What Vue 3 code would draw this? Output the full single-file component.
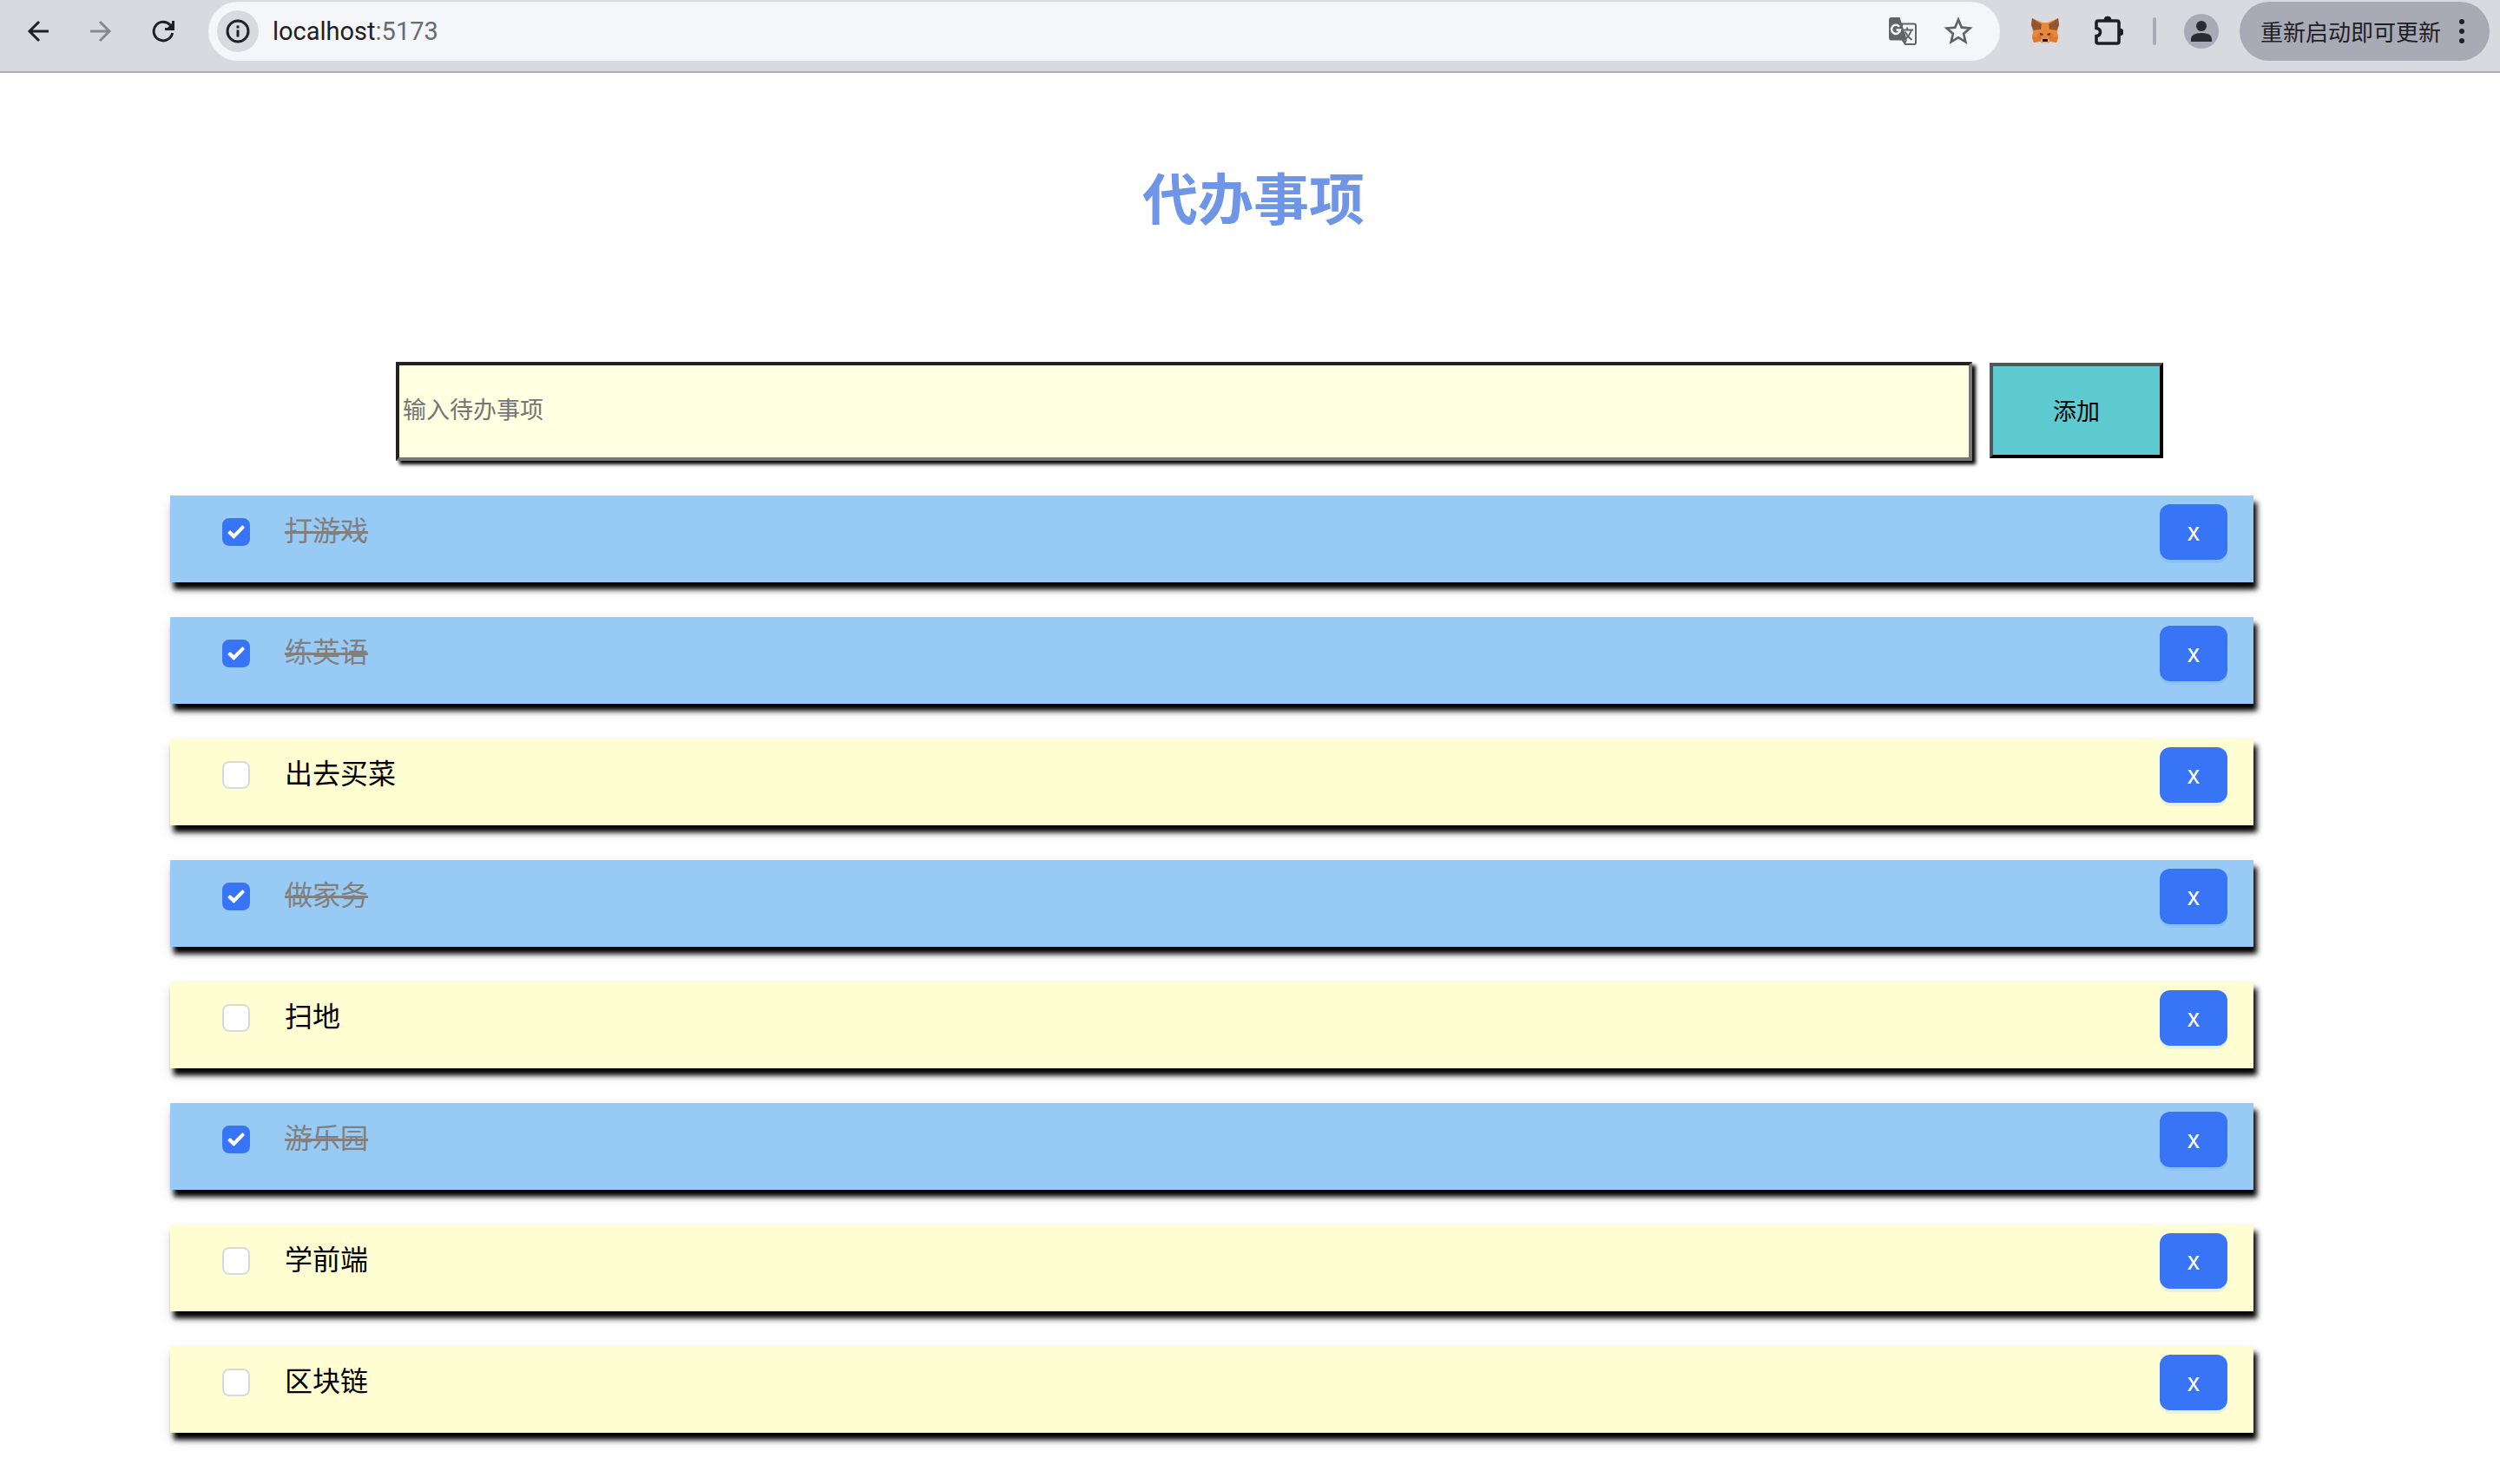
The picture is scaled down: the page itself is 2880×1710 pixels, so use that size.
<script setup>
import { ref } from 'vue'

const draft = ref('')
const todos = ref([
  { id: 1, text: '打游戏', done: true },
  { id: 2, text: '练英语', done: true },
  { id: 3, text: '出去买菜', done: false },
  { id: 4, text: '做家务', done: true },
  { id: 5, text: '扫地', done: false },
  { id: 6, text: '游乐园', done: true },
  { id: 7, text: '学前端', done: false },
  { id: 8, text: '区块链', done: false },
])

function addTodo() {
  const text = draft.value.trim()
  if (!text) return
  todos.value.push({ id: Date.now(), text, done: false })
  draft.value = ''
}

function removeTodo(id) {
  todos.value = todos.value.filter((todo) => todo.id !== id)
}
</script>

<template>
  <div class="window">
    <header class="toolbar">
      <nav class="nav">
        <button type="button" class="icon-button" aria-label="后退">
          <svg width="32" height="32" viewBox="0 0 32 32" fill="none" stroke="#1f2024" stroke-width="3">
            <path d="M28 16H6M17 5L6 16l11 11" />
          </svg>
        </button>
        <button type="button" class="icon-button" aria-label="前进">
          <svg width="32" height="32" viewBox="0 0 32 32" fill="none" stroke="#87898d" stroke-width="3">
            <path d="M4 16h22M15 5l11 11-11 11" />
          </svg>
        </button>
        <button type="button" class="icon-button" aria-label="重新加载">
          <svg width="32" height="32" viewBox="0 0 32 32" fill="none" stroke="#1f2024" stroke-width="3">
            <path d="M26.600 18A10.800 10.800 0 1 1 24 8.800l2.600 3.200" />
            <path d="M27.500 4v9.500h-9.500" />
            <path d="M26 7v5h-5z" fill="#1f2024" stroke="none" />
          </svg>
        </button>
      </nav>

      <div class="omnibox">
        <button type="button" class="site-info" aria-label="网站信息">
          <svg width="28" height="28" viewBox="0 0 28 28" fill="none" stroke="#1f2024" stroke-width="3">
            <circle cx="14" cy="14" r="12" />
            <path d="M14 12.500v8" />
            <path d="M14 7.500v3" />
          </svg>
        </button>
        <span class="address">localhost<span class="port">:5173</span></span>
        <div class="omnibox-actions">
          <button type="button" class="icon-button" aria-label="翻译此页">
            <svg width="32" height="32" viewBox="0 0 32 32" fill="none">
              <path d="M15 7.500h14q2 0 2 2V29q0 2-2 2H19l-4-6z" fill="#f5f6f9" stroke="#616366" stroke-width="2" />
              <path d="M3 0h9.500l8.500 26.500H3q-3 0-3-3V3q0-3 3-3z" fill="#616366" />
              <path d="M15.500 26.500H21L18.500 31z" fill="#616366" />
              <path d="M12 10.800A5 5 0 1 0 13 14.500H8.500" stroke="#f5f6f9" stroke-width="2.500" />
              <path d="M17 14.500h11M21 11.500v3M26 14.500q-2 7-8 11M18.500 16.500q3 6 8 9.500" stroke="#616366" stroke-width="1.800" />
            </svg>
          </button>
          <button type="button" class="icon-button" aria-label="为此标签页添加书签">
            <svg width="40" height="40" viewBox="0 0 24 24" fill="#616366">
              <path
                d="M22 9.240l-7.190-.62L12 2 9.190 8.630 2 9.240l5.460 4.730L5.820 21 12 17.270 18.180 21l-1.630-7.030L22 9.240zM12 15.400l-3.760 2.270 1-4.280-3.320-2.880 4.380-.38L12 6.100l1.710 4.040 4.380.38-3.320 2.880 1 4.280L12 15.400z"
              />
            </svg>
          </button>
        </div>
      </div>

      <div class="extensions">
        <button type="button" class="icon-button" aria-label="MetaMask">
          <svg width="32" height="32" viewBox="0 0 32 32">
            <path d="M1 1l12 5h6l12-5 1 7-2 9 1 6-2 6-7-1-3 2h-6l-3-2-7 1-2-6 1-6L0 8z" fill="#e8883a" />
            <path d="M1 1l11 7-1 6-8 1-3-6zM31 1l-11 7 1 6 8 1 3-6z" fill="#8f5630" />
            <path d="M3 15l8-1-5 7-5 2zM29 15l-8-1 5 7 5 2z" fill="#e8883a" />
            <path d="M1 23l9-1 1 5-8 2zM31 23l-9-1-1 5 8 2z" fill="#dc7830" />
            <path d="M6 21l4-4 3 3-2 5zM26 21l-4-4-3 3 2 5z" fill="#d9772f" />
            <path d="M10 18l4 1-1 2-3-1zM22 18l-4 1 1 2 3-1z" fill="#4a4038" />
            <path d="M11 27l2-2h6l2 2-3 3h-4z" fill="#d5bfb2" />
            <path d="M13 25h6v3h-6z" fill="#15120f" />
          </svg>
        </button>
        <button type="button" class="icon-button" aria-label="扩展程序">
          <svg width="36" height="36" viewBox="0 0 36 36">
            <path
              d="M5 8q0-2 2-2h22q2 0 2 2v22q0 2-2 2H7q-2 0-2-2v-6.500q4.500-.5 4.500-4.500T5 14.500z"
              fill="none"
              stroke="#1f2024"
              stroke-width="3.600"
            />
            <path d="M14 5a4 4 0 0 1 8 0zM32 15a4 4 0 0 1 0 8z" fill="#1f2024" stroke="#1f2024" />
          </svg>
        </button>
        <span class="divider"></span>
        <button type="button" class="avatar" aria-label="个人资料">
          <svg width="40" height="40" viewBox="0 0 40 40" fill="#2b2c31">
            <circle cx="20" cy="14" r="6" />
            <path d="M8 32v-3.500Q9 22 20 22t12 6.500V32z" />
          </svg>
        </button>
      </div>

      <button type="button" class="update">
        <span class="update-text">重新启动即可更新</span>
        <svg width="8" height="32" viewBox="0 0 8 32" fill="#1f2024">
          <circle cx="4" cy="5" r="3" />
          <circle cx="4" cy="16" r="3" />
          <circle cx="4" cy="27" r="3" />
        </svg>
      </button>
    </header>

    <main class="page">
      <h1 class="title">代办事项</h1>

      <form class="entry" @submit.prevent="addTodo">
        <input v-model="draft" class="entry-input" type="text" placeholder="输入待办事项" aria-label="输入待办事项" />
        <button class="entry-add" type="submit">添加</button>
      </form>

      <ul class="list">
        <li v-for="todo in todos" :key="todo.id" class="item" :class="{ done: todo.done }">
          <label class="item-label">
            <input v-model="todo.done" class="check" type="checkbox" />
            <span class="item-text">{{ todo.text }}</span>
          </label>
          <button class="remove" type="button" @click="removeTodo(todo.id)">x</button>
        </li>
      </ul>
    </main>
  </div>
</template>

<style>
body {
  margin: 0;
  background: #fff;
}
</style>

<style scoped>
.window {
  font-family: Roboto, "Noto Sans CJK SC", sans-serif;
  color: #000;
}

button,
input {
  box-sizing: border-box;
  margin: 0;
  font-family: inherit;
}

svg {
  display: block;
}

.toolbar {
  box-sizing: border-box;
  display: flex;
  align-items: flex-start;
  height: 84px;
  padding: 2px 12px 0 28px;
  background: #d9dae0;
  border-bottom: 2px solid #aeb0b6;
}

.nav,
.extensions {
  display: flex;
  align-items: center;
  height: 68px;
}

.nav {
  gap: 40px;
  margin-right: 36px;
}

.icon-button {
  padding: 0;
  background: none;
  border: 0;
}

.omnibox {
  display: flex;
  flex: 1;
  align-items: center;
  height: 68px;
  box-sizing: border-box;
  padding: 0 28px 0 10px;
  background: #f5f6f9;
  border-radius: 34px;
}

.site-info {
  display: grid;
  place-items: center;
  width: 48px;
  height: 48px;
  padding: 0;
  background: #d9dae0;
  border: 0;
  border-radius: 50%;
}

.address {
  flex: 1;
  margin-left: 16px;
  font-size: 29px;
  line-height: 40px;
  color: #1f2024;
}

.port {
  color: #6a6b6e;
}

.omnibox-actions {
  display: flex;
  align-items: center;
  gap: 28px;
}

.extensions {
  margin: 0 24px 0 36px;
}

.extensions .icon-button + .icon-button {
  margin-left: 38px;
}

.divider {
  width: 4px;
  height: 32px;
  margin: 0 32px 0 34px;
  background: #a8aab6;
  border-radius: 2px;
}

.avatar {
  width: 40px;
  height: 40px;
  padding: 0;
  background: #a8aab6;
  border: 0;
  border-radius: 50%;
}

.update {
  display: flex;
  align-items: center;
  justify-content: space-between;
  width: 288px;
  height: 68px;
  padding: 0 28px 0 24px;
  font-family: "Noto Sans CJK SC", sans-serif;
  font-size: 26px;
  color: #1f2024;
  background: #a8aab6;
  border: 0;
  border-radius: 34px;
}

.update-text {
  padding-bottom: 2px;
}

.page {
  padding: 100px 0 48px;
}

.title {
  margin: 0 0 137px;
  padding-left: 8px;
  font-size: 64px;
  line-height: 96px;
  font-weight: 700;
  text-align: center;
  color: #6f95e6;
}

.entry {
  display: flex;
  align-items: flex-start;
  gap: 20px;
  padding: 0 388px 0 456px;
}

.entry-input {
  flex: 1;
  height: 114px;
  padding: 0 4px 2px;
  font-size: 27px;
  background: #ffffe1;
  border: 4px solid;
  border-color: #222 #767676 #767676 #222;
  border-radius: 0;
  box-shadow: 4px 4px 4px #000;
}

.entry-input::placeholder {
  color: #757575;
}

.entry-add {
  width: 200px;
  height: 110px;
  margin-top: 1px;
  padding: 0 0 2px;
  font-size: 27px;
  color: #000;
  background: #5dcbd0;
  border: 4px solid;
  border-color: #555 #000 #000 #555;
}

.list {
  display: flex;
  flex-direction: column;
  gap: 40px;
  margin: 40px 284px 0 196px;
  padding: 0;
  list-style: none;
}

.item {
  box-sizing: border-box;
  display: flex;
  align-items: flex-start;
  justify-content: space-between;
  height: 100px;
  padding: 10px 30px 0 60px;
  background: #fffed2;
  box-shadow:
    4px 8px 6px #000,
    0 8px 16px rgba(0, 0, 0, 0.1);
}

.item.done {
  background: #97cbf6;
}

.item-label {
  display: flex;
  align-items: center;
  gap: 40px;
  height: 64px;
}

.check {
  display: grid;
  place-items: center;
  width: 32px;
  height: 32px;
  appearance: none;
  background: #fff;
  border: 2px solid #d9d9d9;
  border-radius: 8px;
}

.check:checked {
  background: #3875f6;
  border-color: #3875f6;
}

.check:checked::before {
  width: 20px;
  height: 16px;
  content: "";
  background: #fff;
  clip-path: polygon(0 56%, 15% 38%, 37% 63%, 87% 0, 100% 19%, 37% 100%);
}

.item-text {
  padding-bottom: 2px;
  font-size: 32px;
  line-height: 60px;
}

.done .item-text {
  color: #808080;
  text-decoration: line-through;
  text-decoration-thickness: 3px;
}

.remove {
  width: 78px;
  height: 64px;
  padding: 0;
  font-family: Inter, sans-serif;
  font-size: 28px;
  font-weight: 400;
  color: #fff;
  background: #3875f6;
  border: 0;
  border-radius: 12px;
  box-shadow: 0 4px 0 rgba(5, 95, 255, 0.08);
}
</style>
